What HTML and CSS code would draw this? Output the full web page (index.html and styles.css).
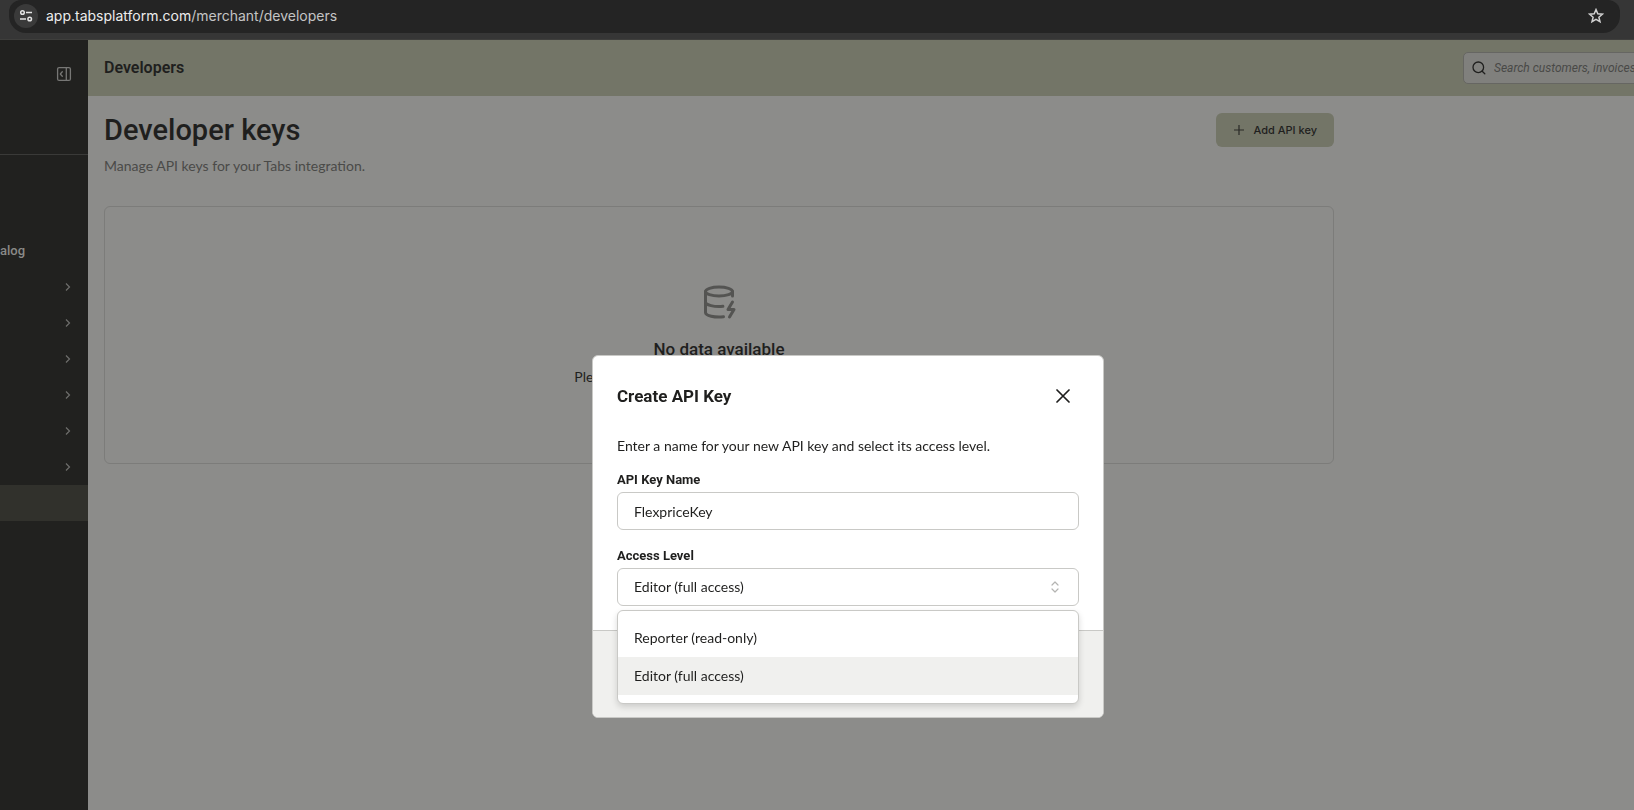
FILE: index.html
```html
<!DOCTYPE html>
<html lang="en">
<head>
<meta charset="utf-8">
<title>Developers</title>
<link rel="stylesheet" href="styles.css">
</head>
<body>
<div class="browser">
  <div class="omnibox">
    <button class="site-info" aria-label="Site information">
      <svg width="14" height="14" viewBox="0 0 14 14" fill="none" stroke="#e3e3e3" stroke-width="1.5"><circle cx="3.5" cy="3.5" r="1.8"/><path d="M7 3.5h6M1 10h6"/><circle cx="10.7" cy="10" r="1.8"/></svg>
    </button>
    <span class="url"><span class="host">app.tabsplatform.com</span>/merchant/developers</span>
    <button class="star" aria-label="Bookmark this page">
      <svg width="16" height="16" viewBox="0 0 16 16" fill="none" stroke="#d0d0d0" stroke-width="1.5"><path d="M8 1.600l1.800 4.200 4.600.4-3.500 3 1.100 4.500L8 11.300l-4 2.400 1.100-4.500-3.500-3 4.600-.4z"/></svg>
    </button>
  </div>
</div>
<div class="app">
  <aside class="sidebar">
    <div class="sidebar-top">
      <button class="collapse" aria-label="Collapse sidebar">
        <svg width="16" height="16" viewBox="0 0 16 16" fill="none" stroke="#777775" stroke-width="1.3" stroke-linecap="round" stroke-linejoin="round"><rect x="1.600" y="1.600" width="12.800" height="12.800" rx="1.500"/><path d="M10.300 1.600v12.800M6.300 5.800L4.300 8l2 2.200"/></svg>
      </button>
    </div>
    <nav class="nav">
      <a class="nav-item" href="#">alog</a>
      <a class="nav-item" href="#" aria-label="Expand section 1"><svg class="chev" viewBox="0 0 6 8"><path d="M1 .5L4.500 4 1 7.500"/></svg></a>
      <a class="nav-item" href="#" aria-label="Expand section 2"><svg class="chev" viewBox="0 0 6 8"><path d="M1 .5L4.500 4 1 7.500"/></svg></a>
      <a class="nav-item" href="#" aria-label="Expand section 3"><svg class="chev" viewBox="0 0 6 8"><path d="M1 .5L4.500 4 1 7.500"/></svg></a>
      <a class="nav-item" href="#" aria-label="Expand section 4"><svg class="chev" viewBox="0 0 6 8"><path d="M1 .5L4.500 4 1 7.500"/></svg></a>
      <a class="nav-item" href="#" aria-label="Expand section 5"><svg class="chev" viewBox="0 0 6 8"><path d="M1 .5L4.500 4 1 7.500"/></svg></a>
      <a class="nav-item" href="#" aria-label="Expand section 6"><svg class="chev" viewBox="0 0 6 8"><path d="M1 .5L4.500 4 1 7.500"/></svg></a>
      <a class="nav-item active" href="#" aria-label="Developers" aria-current="page"></a>
    </nav>
  </aside>
  <div class="page">
    <header class="topbar">
      <span class="crumb">Developers</span>
      <label class="search">
        <svg width="14" height="14" viewBox="0 0 14 14" fill="none" stroke="#1f1f1e" stroke-width="1.3" stroke-linecap="round"><circle cx="6.300" cy="6.300" r="5.300"/><path d="M10.200 10.200L12.800 12.800"/></svg>
        <input type="search" aria-label="Search" placeholder="Search customers, invoices">
      </label>
    </header>
    <main class="content">
      <div class="heading">
        <div>
          <h1>Developer keys</h1>
          <p class="lead">Manage API keys for your Tabs integration.</p>
        </div>
        <button class="add">
          <svg width="10" height="10" viewBox="0 0 10 10" stroke="#2a2a27" stroke-width="1.200"><path d="M5 0v10M0 5h10"/></svg>
          Add API key
        </button>
      </div>
      <section class="empty">
        <svg width="36" height="36" viewBox="0 0 24 24" fill="none" stroke="#545452" stroke-width="2" stroke-linecap="round" stroke-linejoin="round"><ellipse cx="12" cy="5" rx="9" ry="3"/><path d="M3 5v14a9 3 0 0 0 12 2.840"/><path d="M21 5v3"/><path d="M21 12l-3 5h4l-3 5"/><path d="M3 12a9 3 0 0 0 11.590 2.870"/></svg>
        <h2>No data available</h2>
        <p>Please check back later or create a new record..</p>
      </section>
    </main>
  </div>
</div>
<div class="overlay">
  <form class="modal" role="dialog" aria-labelledby="dialog-title">
    <div class="modal-body">
      <div class="modal-head">
        <h2 id="dialog-title">Create API Key</h2>
        <button type="button" class="close" aria-label="Close">
          <svg width="14" height="14" viewBox="0 0 14 14" stroke="#1f1f1e" stroke-width="1.700" stroke-linecap="round"><path d="M1 1l12 12M13 1L1 13"/></svg>
        </button>
      </div>
      <p class="intro">Enter a name for your new API key and select its access level.</p>
      <label for="key-name">API Key Name</label>
      <input id="key-name" class="control" type="text" value="FlexpriceKey">
      <label for="access">Access Level</label>
      <div class="select-wrap">
        <select id="access" class="control">
          <option>Reporter (read-only)</option>
          <option selected>Editor (full access)</option>
        </select>
        <svg class="updown" width="8" height="12" viewBox="0 0 8 12" fill="none" stroke="#b4b4b2" stroke-width="1.200" stroke-linecap="round" stroke-linejoin="round"><path d="M1 4l3-3 3 3M1 8l3 3 3-3"/></svg>
        <ul class="menu" role="listbox" aria-label="Access Level">
          <li role="option">Reporter (read-only)</li>
          <li role="option" class="selected" aria-selected="true">Editor (full access)</li>
        </ul>
      </div>
    </div>
    <div class="modal-foot"></div>
  </form>
</div>
</body>
</html>
```

FILE: styles.css
```css
* { box-sizing: border-box; }
body {
  margin: 0;
  min-height: 100vh;
  display: flex;
  flex-direction: column;
  overflow: hidden;
  font-family: Lato, "Liberation Sans", sans-serif;
  font-size: 14px;
  line-height: 20px;
  color: #1f1f1e;
  background: #8c8c8a;
}
h1, h2, p, ul { margin: 0; padding: 0; }
button { border: 0; padding: 0; background: none; font: inherit; color: inherit; }
svg { display: block; flex: none; }
h1, h2, label, .crumb, .nav-item { font-family: Roboto, "Liberation Sans", sans-serif; }

.browser {
  height: 40px;
  padding: 0 14px 0 9px;
  background: #363636;
  border-bottom: 1px solid #3e3e3c;
}
.omnibox {
  height: 33px;
  display: flex;
  align-items: center;
  gap: 8px;
  padding: 0 16px 2px 5px;
  background: #242424;
  border-radius: 12px 12px 17px 17px;
}
.site-info {
  width: 24px;
  height: 24px;
  display: grid;
  place-items: center;
  border-radius: 50%;
  background: #3a3a3a;
}
.url { flex: 1; color: #c4c4c4; font-family: Inter, sans-serif; font-size: 14px; }
.host { color: #ededed; }

.app { flex: 1; display: flex; }
.sidebar { width: 88px; flex: none; background: #21211f; color: #8a8a88; }
.sidebar-top {
  height: 115px;
  display: flex;
  justify-content: flex-end;
  align-items: flex-start;
  padding: 26px 16px 0 0;
  border-bottom: 1px solid #3a3a38;
}
.nav { padding-top: 78px; }
.nav-item {
  height: 36px;
  display: flex;
  align-items: center;
  padding-right: 17px;
  color: inherit;
  font-size: 13px;
  font-weight: 500;
  text-decoration: none;
}
.nav-item.active { background: #31312c; }
.chev {
  width: 6px;
  height: 8px;
  margin-left: auto;
  fill: none;
  stroke: #6e6e6c;
  stroke-width: 1.2;
}

.page { flex: 1; min-width: 0; }
.topbar {
  height: 56px;
  display: flex;
  align-items: center;
  justify-content: space-between;
  padding-left: 16px;
  overflow: hidden;
  background: #737567;
}
.crumb { font-size: 16px; font-weight: 600; }
.search {
  width: 240px;
  height: 32px;
  flex: none;
  display: flex;
  align-items: center;
  gap: 8px;
  margin-right: -69px;
  padding: 0 8px;
  border: 1px solid #666662;
  border-radius: 5px;
  background: #80807d;
}
.search input {
  flex: 1;
  min-width: 0;
  padding: 0;
  border: 0;
  background: none;
  font: italic 12px/16px Roboto, sans-serif;
}
.search input::placeholder { color: #494947; }

.content { max-width: 1262px; padding: 16px; }
.heading {
  display: flex;
  justify-content: space-between;
  align-items: flex-start;
  margin-bottom: 30px;
}
h1 { font-size: 29px; line-height: 36px; font-weight: 500; }
.lead { margin-top: 8px; color: #4a4a48; }
.add {
  height: 34px;
  display: flex;
  align-items: center;
  gap: 9px;
  margin-top: 1px;
  padding: 0 17px 0 18px;
  border-radius: 6px;
  background: #737567;
  font-family: Inter, sans-serif;
  font-size: 11px;
  font-weight: 500;
}
.empty {
  height: 258px;
  display: flex;
  flex-direction: column;
  align-items: center;
  padding-top: 77px;
  border: 1px solid #7c7c7a;
  border-radius: 6px;
}
.empty h2 { margin-top: 17px; font-size: 17px; line-height: 24px; font-weight: 500; }
.empty p { margin-top: 6px; }

.overlay {
  position: fixed;
  inset: 40px 0 0;
  display: flex;
  justify-content: center;
  align-items: flex-start;
  padding: 315px 0 0 62px;
}
.modal {
  width: 512px;
  border: 1px solid #c9c9c6;
  border-radius: 6px;
  background: #fff;
}
.modal-body { padding: 24px; }
.modal-head { display: flex; justify-content: space-between; align-items: center; height: 32px; }
.modal-head h2 { font-size: 17px; line-height: 24px; font-weight: 700; }
.close { width: 32px; height: 32px; display: grid; place-items: center; }
.intro { margin: 24px 0 14px; }
.modal label { display: block; margin-bottom: 2px; font-size: 13px; font-weight: 700; }
.control {
  display: block;
  width: 100%;
  height: 38px;
  padding: 0 16px;
  border: 1px solid #c9c9c6;
  border-radius: 6px;
  background: #fff;
  color: inherit;
  font: inherit;
  appearance: none;
}
input.control { margin-bottom: 16px; }
.select-wrap { position: relative; }
.updown { position: absolute; right: 20px; top: 13px; }
.menu {
  position: absolute;
  top: 42px;
  left: 0;
  right: 0;
  padding: 8px 0;
  border: 1px solid #c9c9c6;
  border-radius: 6px;
  background: #fff;
  box-shadow: 0 3px 6px rgba(0, 0, 0, .15);
  list-style: none;
}
.menu li { padding: 9px 16px; }
.menu .selected { background: #f0f0ee; }
.modal-foot {
  height: 87px;
  border-top: 1px solid #c9c9c6;
  border-radius: 0 0 5px 5px;
  background: #f0f0ee;
}
```
